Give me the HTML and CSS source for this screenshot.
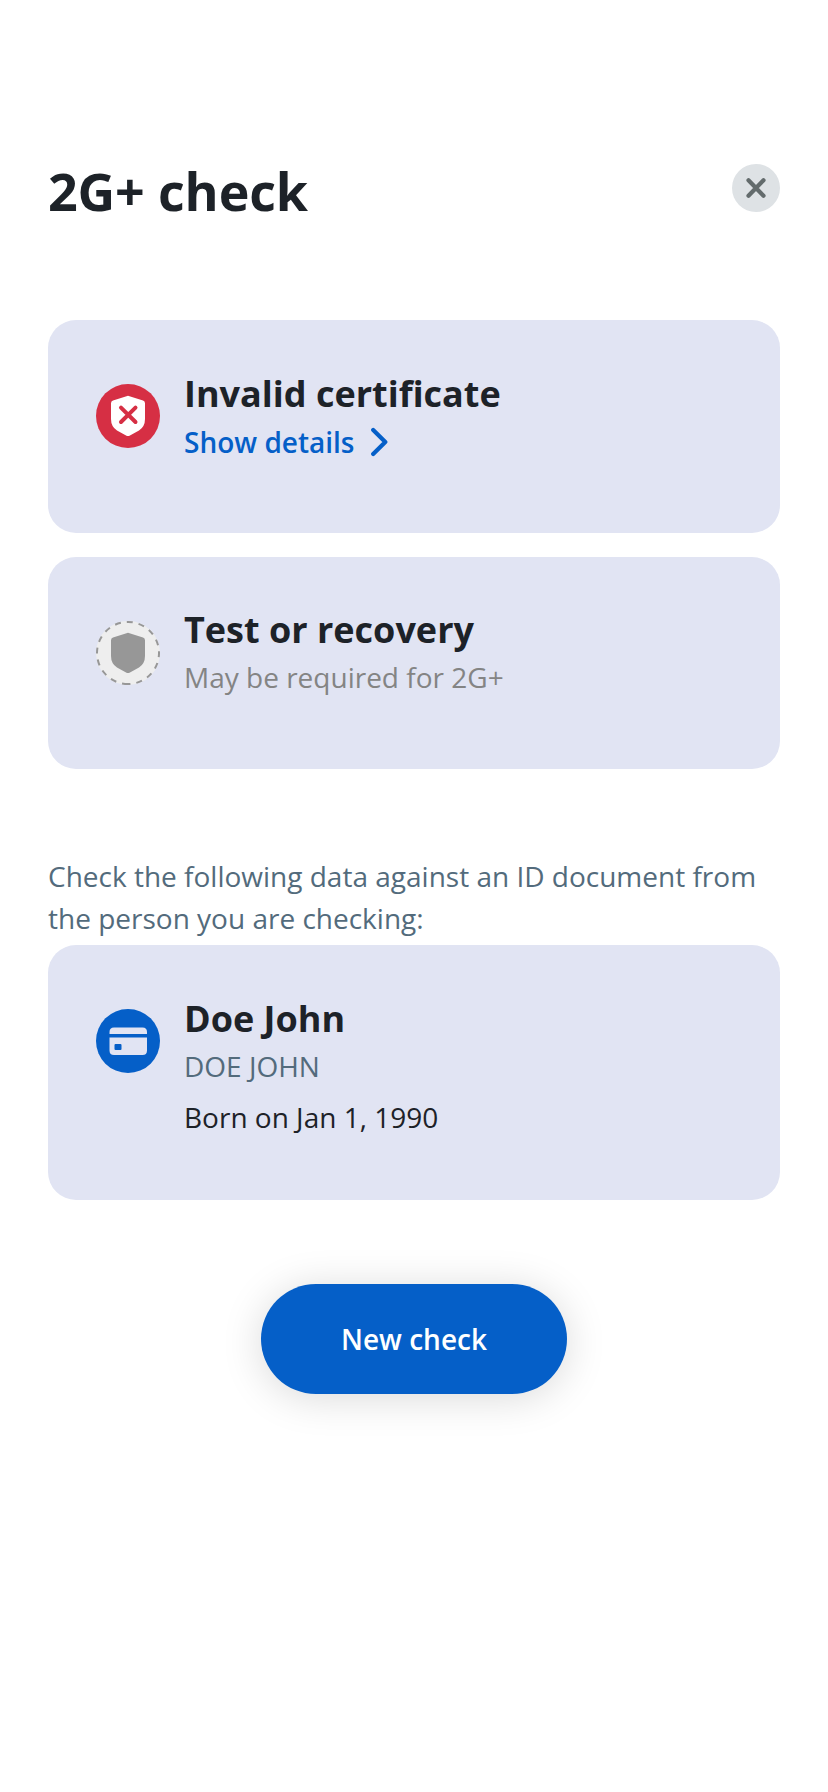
FILE: index.html
```html
<!DOCTYPE html>
<html lang="en">
<head>
<meta charset="utf-8">
<title>2G+ check</title>
<link rel="stylesheet" href="styles.css">
</head>
<body>
<main class="screen">
  <header class="header">
    <h1 class="title">2G+ check</h1>
    <button class="close" aria-label="Close">
      <svg width="48" height="48" viewBox="0 0 48 48"><path d="M16.500 16.300 31.500 31.700M31.500 16.300 16.500 31.700" fill="none" stroke="#636b6c" stroke-width="4.200" stroke-linecap="round"/></svg>
    </button>
  </header>

  <section class="card">
    <svg class="icon" viewBox="0 0 64 64">
      <circle cx="32" cy="32" r="32" fill="#d62f44"/>
      <path d="M30.500 12.200Q32 11.500 33.500 12.200L47 16.600Q49 17.300 49 19.300V35Q49 42.600 43 46.600L33.500 51.700Q32 52.500 30.500 51.700L21 46.600Q15 42.600 15 35V19.300Q15 17.300 17 16.600Z" fill="#fff"/>
      <path d="M25 23.700 39.500 38M39.500 23.700 25 38" fill="none" stroke="#d62f44" stroke-width="4" stroke-linecap="round"/>
    </svg>
    <div class="text">
      <h2 class="name">Invalid certificate</h2>
      <a class="link">Show details
        <svg width="18" height="30" viewBox="0 0 18 30"><path d="M2.200 3 14.300 15 2.200 27" fill="none" stroke="#055fc8" stroke-width="4.200" stroke-linecap="round" stroke-linejoin="round"/></svg>
      </a>
    </div>
  </section>

  <section class="card card-pending">
    <svg class="icon" viewBox="0 0 64 64">
      <circle cx="32" cy="32" r="32" fill="#eee"/>
      <circle cx="32" cy="32" r="31" fill="none" stroke="#979797" stroke-width="2" stroke-dasharray="6 6" transform="rotate(90 32 32)"/>
      <path d="M30.500 12.200Q32 11.500 33.500 12.200L47 16.600Q49 17.300 49 19.300V35Q49 42.600 43 46.600L33.500 51.700Q32 52.500 30.500 51.700L21 46.600Q15 42.600 15 35V19.300Q15 17.300 17 16.600Z" fill="#979797"/>
    </svg>
    <div class="text">
      <h2 class="name">Test or recovery</h2>
      <p class="note">May be required for 2G+</p>
    </div>
  </section>

  <p class="hint">Check the following data against an ID document from the person you are checking:</p>

  <section class="card card-person">
    <svg class="icon" viewBox="0 0 64 64">
      <circle cx="32" cy="32" r="32" fill="#055fc8"/>
      <path d="M13.500 25V23Q13.500 18.500 18 18.500H46.500Q51 18.500 51 23V25ZM13.500 28.500H51V41.500Q51 46 46.500 46H18Q13.500 46 13.500 41.500Z" fill="#e1e4f3"/>
      <rect x="18.500" y="35" width="7" height="6" rx="1" fill="#055fc8"/>
    </svg>
    <div class="text">
      <h2 class="name">Doe John</h2>
      <p class="latin">DOE JOHN</p>
      <p class="born">Born on Jan 1, 1990</p>
    </div>
  </section>

  <button class="primary">New check</button>
</main>
</body>
</html>
```
FILE: styles.css
```css
* {
  box-sizing: border-box;
}

body {
  margin: 0;
  background: #fff;
  color: #1d2228;
  font-family: "Open Sans", "Noto Sans", sans-serif;
  font-size: 28px;
  line-height: 42px;
}

h1, h2, p {
  margin: 0;
}

button {
  border: 0;
  padding: 0;
  font: inherit;
}

.screen {
  display: flex;
  flex-direction: column;
  min-height: 1792px;
  padding: 155px 48px 0;
}

.header {
  display: flex;
  justify-content: space-between;
  align-items: flex-start;
  height: 165px;
}

.title {
  font-size: 52px;
  font-weight: 700;
  line-height: 72px;
  letter-spacing: -0.15px;
}

.close {
  width: 48px;
  height: 48px;
  margin-top: 9px;
  border-radius: 50%;
  background: #dee2e5;
}

.close svg {
  display: block;
}

.card {
  display: flex;
  gap: 24px;
  height: 213px;
  padding: 50px 48px 0;
  border-radius: 28px;
  background: #e1e4f3;
}

.card-pending {
  height: 212px;
  margin-top: 24px;
  padding-top: 49px;
}

.card-person {
  height: 255px;
}

.icon {
  flex: none;
  width: 64px;
  height: 64px;
  margin-top: 14px;
}

.card-pending .icon {
  margin-top: 15px;
}

.name {
  font-size: 36px;
  font-weight: 700;
  line-height: 48px;
}

.link {
  display: flex;
  align-items: center;
  gap: 16px;
  margin-top: 3px;
  color: #055fc8;
  font-weight: 600;
}

.note {
  margin-top: 2px;
  color: #848484;
}

.hint {
  margin-top: 86px;
  padding-bottom: 6px;
  color: #536b7c;
}

.latin {
  margin-top: 2px;
  color: #536b7c;
}

.born {
  margin-top: 9px;
}

.primary {
  align-self: center;
  width: 306px;
  height: 110px;
  margin-top: 84px;
  border-radius: 55px;
  background: #055fc8;
  box-shadow: 0 4px 40px rgba(0, 0, 0, 0.15);
  color: #fff;
  font-weight: 600;
}
```
